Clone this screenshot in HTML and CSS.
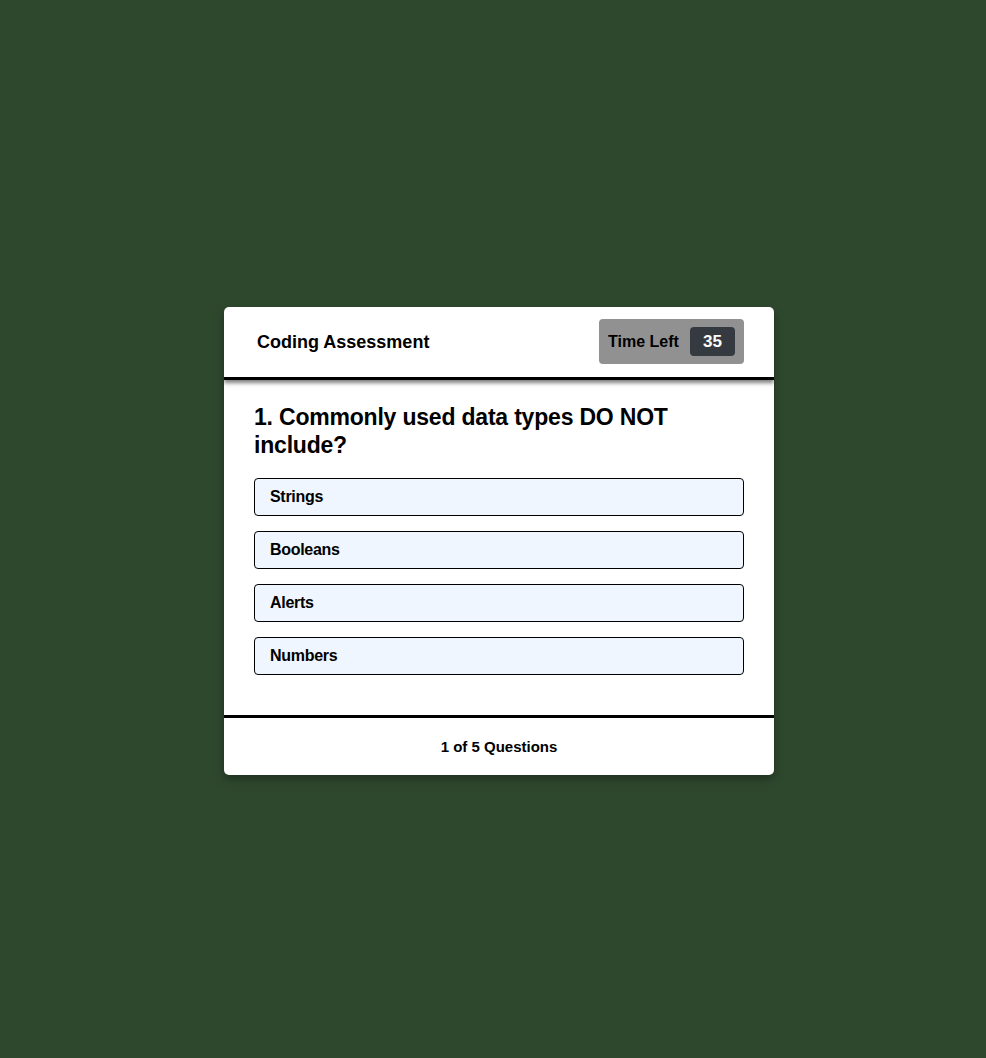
FILE: index.html
```html
<!DOCTYPE html>
<html>
<head>
<meta charset="utf-8">
<link rel="stylesheet" href="styles.css">
</head>
<body>
<main class="page">
  <section class="card">
    <header class="card-header">
      <h1 class="title">Coding Assessment</h1>
      <div class="timer">
        <span class="timer-label">Time Left</span>
        <span class="timer-value">35</span>
      </div>
    </header>
    <div class="card-body">
      <h2 class="question">1. Commonly used data types DO NOT include?</h2>
      <div class="options">
        <button class="option">Strings</button>
        <button class="option">Booleans</button>
        <button class="option">Alerts</button>
        <button class="option">Numbers</button>
      </div>
    </div>
    <footer class="card-footer">1 of 5 Questions</footer>
  </section>
</main>
</body>
</html>
```
FILE: styles.css
```css
* { box-sizing: border-box; }
html, body {
  margin: 0;
  padding: 0;
  height: 100%;
}
body {
  background: #2e482e;
  font-family: "Liberation Sans", Arial, sans-serif;
  color: #000;
}
.page {
  display: flex;
  justify-content: center;
  padding-top: 307px;
  padding-left: 12px;
}
.card {
  width: 550px;
  background: #fff;
  border-radius: 5px;
  box-shadow: 0 4px 10px rgba(0,0,0,0.35);
  overflow: hidden;
}
.card-header {
  height: 73px;
  display: flex;
  align-items: center;
  justify-content: space-between;
  padding: 0 30px 0 33px;
  border-bottom: 3px solid #000;
  box-shadow: 0 3px 4px rgba(0,0,0,0.5);
  position: relative;
}
.title {
  margin: 0;
  font-size: 18px;
  font-weight: bold;
}
.timer {
  display: flex;
  align-items: center;
  height: 45px;
  width: 145px;
  margin-bottom: 1px;
  padding: 0 9px 0 9px;
  background: #919191;
  border-radius: 4px;
  justify-content: space-between;
}
.timer-label {
  font-size: 16px;
  font-weight: bold;
}
.timer-value {
  width: 45px;
  height: 29px;
  display: flex;
  align-items: center;
  justify-content: center;
  background: #343a40;
  color: #fff;
  border-radius: 4px;
  font-size: 17px;
  font-weight: bold;
}
.card-body {
  padding: 23px 30px 40px 30px;
}
.question {
  margin: 0 0 19px 0;
  font-size: 23px;
  line-height: 28px;
  font-weight: bold;
  letter-spacing: -0.2px;
}
.options {
  display: flex;
  flex-direction: column;
  gap: 15px;
}
.option {
  display: block;
  width: 100%;
  height: 38px;
  text-align: left;
  padding: 0 15px;
  background: #eff6ff;
  border: 1px solid #000;
  border-radius: 4px;
  font-family: inherit;
  font-size: 16px;
  font-weight: bold;
  color: #000;
  letter-spacing: -0.3px;
}
.card-footer {
  border-top: 3px solid #000;
  height: 60px;
  display: flex;
  align-items: center;
  justify-content: center;
  font-size: 15px;
  font-weight: bold;
}
```
